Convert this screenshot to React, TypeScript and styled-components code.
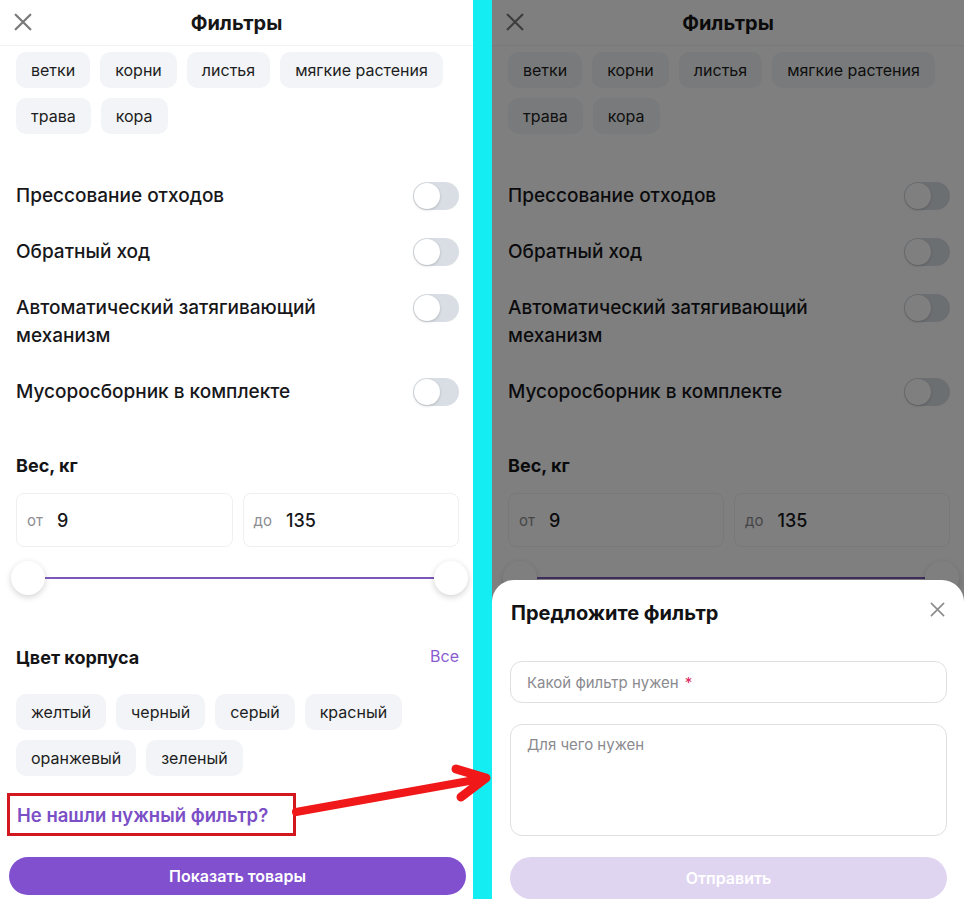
import React from "react";
import styled, { createGlobalStyle } from "styled-components";

const GlobalStyle = createGlobalStyle`
  * { box-sizing: border-box; }
  html, body { margin: 0; padding: 0; background: #ffffff; }
  body { font-family: Inter, "Noto Sans", "Liberation Sans", sans-serif; color: #1b1b1f; }
`;

const Page = styled.div`
  position: relative;
  display: flex;
  width: 964px;
  height: 899px;
  overflow: hidden;
  background: #ffffff;
`;

const Phone = styled.div<{ $w: number }>`
  position: relative;
  flex: 0 0 ${(p) => p.$w}px;
  width: ${(p) => p.$w}px;
  height: 899px;
  overflow: hidden;
  background: #ffffff;
`;

const Divider = styled.div`
  flex: 0 0 19px;
  background: #14eef2;
`;

const Header = styled.header`
  position: relative;
  height: 46px;
  display: flex;
  align-items: center;
  justify-content: center;
  border-bottom: 1px solid #f1f2f4;
`;

const HeaderClose = styled.button`
  position: absolute;
  left: 14px;
  top: 13px;
  width: 18px;
  height: 18px;
  padding: 0;
  border: 0;
  background: none;
  color: #7a7a7a;
  display: flex;
`;

const Title = styled.h1`
  margin: 0;
  font-size: 20px;
  line-height: 24px;
  font-weight: 700;
  color: #161616;
`;

const Body = styled.div`
  display: flex;
  flex-direction: column;
  padding: 6px 14px 0 16px;
`;

const ChipGrid = styled.div<{ $mt?: number }>`
  display: flex;
  flex-wrap: wrap;
  gap: 10px;
  margin-top: ${(p) => p.$mt ?? 0}px;
`;

const Chip = styled.span`
  height: 36px;
  display: inline-flex;
  align-items: center;
  padding: 0 15px;
  border-radius: 10px;
  background: #f2f4f7;
  font-size: 16px;
  font-weight: 400;
  color: #1d1d21;
`;

const ToggleList = styled.div`
  display: flex;
  flex-direction: column;
  gap: 28px;
  margin-top: 48px;
`;

const ToggleRow = styled.div`
  display: flex;
  align-items: flex-start;
  justify-content: space-between;
`;

const ToggleLabel = styled.span`
  flex: 1;
  padding-right: 64px;
  font-size: 19px;
  line-height: 28px;
  font-weight: 500;
  color: #17171a;
`;

const Switch = styled.span`
  position: relative;
  flex: 0 0 46px;
  height: 28px;
  border-radius: 14px;
  background: #d9dee4;
  &::after {
    content: "";
    position: absolute;
    left: 1px;
    top: 1px;
    width: 26px;
    height: 26px;
    border-radius: 50%;
    background: #ffffff;
    box-shadow: 0 1px 3px rgba(0, 0, 0, 0.18);
  }
`;

const SectionTitle = styled.h2<{ $mt: number }>`
  margin: ${(p) => p.$mt}px 0 0;
  font-size: 18px;
  line-height: 28px;
  font-weight: 700;
  color: #141416;
`;

const SectionHeader = styled.div`
  display: flex;
  align-items: center;
  justify-content: space-between;
  margin-top: 49px;
`;

const AllLink = styled.span`
  font-size: 16px;
  line-height: 24px;
  color: #8a5cd1;
  margin-top: -4px;
`;

const RangeInputs = styled.div`
  display: grid;
  grid-template-columns: 1fr 1fr;
  gap: 10px;
  margin-top: 13px;
`;

const RangeBox = styled.div`
  height: 54px;
  display: flex;
  align-items: center;
  gap: 14px;
  padding: 0 10px;
  border: 1px solid #eef0f2;
  border-radius: 8px;
`;

const RangePrefix = styled.span`
  font-size: 15px;
  color: #8d8d92;
`;

const RangeValue = styled.span`
  font-size: 18px;
  font-weight: 500;
  color: #17171a;
`;

const Slider = styled.div`
  display: flex;
  align-items: center;
  margin: 14px -9px 0 -5px;
`;

const Thumb = styled.span`
  flex: 0 0 34px;
  height: 34px;
  border-radius: 50%;
  background: #ffffff;
  box-shadow: 0 2px 6px rgba(0, 0, 0, 0.18);
`;

const SliderLine = styled.span`
  flex: 1;
  height: 2px;
  background: #7b57b8;
`;

const Highlight = styled.div<{ $marked?: boolean }>`
  width: 289px;
  height: 43px;
  margin: 17px 0 0 -9px;
  padding-left: 7px;
  display: flex;
  align-items: center;
  border: 3px solid ${(p) => (p.$marked ? "#d3171f" : "transparent")};
`;

const SuggestLink = styled.span`
  font-size: 18.5px;
  font-weight: 600;
  color: #7b4fc6;
`;

const ShowButton = styled.button`
  height: 38px;
  margin: 21px -7px 0 -7px;
  border: 0;
  border-radius: 19px;
  background: #8150cf;
  color: #ffffff;
  font-family: inherit;
  font-size: 16px;
  font-weight: 600;
`;

const Overlay = styled.div`
  position: absolute;
  inset: 0;
  z-index: 2;
  background: rgba(0, 0, 0, 0.5);
`;

const Sheet = styled.div`
  position: absolute;
  z-index: 3;
  left: 0;
  right: 0;
  top: 580px;
  bottom: 0;
  background: #ffffff;
  border-radius: 22px 22px 0 0;
  padding: 19px 17px 0 18px;
  display: flex;
  flex-direction: column;
`;

const SheetHeader = styled.div`
  position: relative;
  display: flex;
  align-items: center;
`;

const SheetTitle = styled.h3`
  margin: 0 0 0 1px;
  font-size: 20px;
  line-height: 28px;
  font-weight: 700;
  color: #121214;
`;

const SheetClose = styled.span`
  position: absolute;
  right: 2px;
  top: 3px;
  width: 15px;
  height: 15px;
  display: flex;
  color: #8c8c8c;
`;

const FieldBox = styled.div<{ $h: number; $mt: number; $top?: boolean }>`
  height: ${(p) => p.$h}px;
  margin-top: ${(p) => p.$mt}px;
  padding: ${(p) => (p.$top ? "10px 16px" : "0 16px")};
  display: flex;
  align-items: ${(p) => (p.$top ? "flex-start" : "center")};
  border: 1px solid #dedfe3;
  border-radius: 12px;
  font-size: 15px;
  color: #8a8a8f;
`;

const Required = styled.span`
  color: #e0245a;
  margin-left: 6px;
`;

const SubmitButton = styled.button`
  height: 42px;
  margin-top: 21px;
  border: 0;
  border-radius: 21px;
  background: #e0d5f1;
  color: #ffffff;
  font-family: inherit;
  font-size: 16px;
  font-weight: 600;
`;

const ArrowLayer = styled.svg`
  position: absolute;
  z-index: 5;
  left: 0;
  top: 0;
  pointer-events: none;
`;

const XIcon = ({ w = 2 }: { w?: number }) => (
  <svg viewBox="0 0 16 16" width="100%" height="100%" fill="none" stroke="currentColor" strokeWidth={w} strokeLinecap="round">
    <path d="M1.5 1.5 L14.5 14.5 M14.5 1.5 L1.5 14.5" />
  </svg>
);

const materials = ["ветки", "корни", "листья", "мягкие растения", "трава", "кора"];
const toggles = [
  "Прессование отходов",
  "Обратный ход",
  "Автоматический затягивающий механизм",
  "Мусоросборник в комплекте",
];
const colors = ["желтый", "черный", "серый", "красный", "оранжевый", "зеленый"];

// `covered`: the lower part lies under the bottom sheet, so it is not drawn.
const FilterScreen = ({ marked, covered }: { marked?: boolean; covered?: boolean }) => (
  <>
    <Header>
      <HeaderClose aria-label="Закрыть">
        <XIcon />
      </HeaderClose>
      <Title>Фильтры</Title>
    </Header>
    <Body>
      <ChipGrid>
        {materials.map((m) => (
          <Chip key={m}>{m}</Chip>
        ))}
      </ChipGrid>
      <ToggleList>
        {toggles.map((t) => (
          <ToggleRow key={t}>
            <ToggleLabel>{t}</ToggleLabel>
            <Switch />
          </ToggleRow>
        ))}
      </ToggleList>
      <SectionTitle $mt={46}>Вес, кг</SectionTitle>
      <RangeInputs>
        <RangeBox>
          <RangePrefix>от</RangePrefix>
          <RangeValue>9</RangeValue>
        </RangeBox>
        <RangeBox>
          <RangePrefix>до</RangePrefix>
          <RangeValue>135</RangeValue>
        </RangeBox>
      </RangeInputs>
      <Slider>
        <Thumb />
        <SliderLine />
        <Thumb />
      </Slider>
      {!covered && (
        <>
          <SectionHeader>
            <SectionTitle $mt={0}>Цвет корпуса</SectionTitle>
            <AllLink>Все</AllLink>
          </SectionHeader>
          <ChipGrid $mt={22}>
            {colors.map((c) => (
              <Chip key={c}>{c}</Chip>
            ))}
          </ChipGrid>
          <Highlight $marked={marked}>
            <SuggestLink>Не нашли нужный фильтр?</SuggestLink>
          </Highlight>
          <ShowButton>Показать товары</ShowButton>
        </>
      )}
    </Body>
  </>
);

export default function App() {
  return (
    <Page>
      <GlobalStyle />
      <Phone $w={473}>
        <FilterScreen marked />
      </Phone>
      <Divider />
      <Phone $w={472}>
        <FilterScreen covered />
        <Overlay />
        <Sheet>
          <SheetHeader>
            <SheetTitle>Предложите фильтр</SheetTitle>
            <SheetClose>
              <XIcon w={1.8} />
            </SheetClose>
          </SheetHeader>
          <FieldBox $h={42} $mt={34}>
            Какой фильтр нужен<Required>*</Required>
          </FieldBox>
          <FieldBox $h={112} $mt={21} $top>
            Для чего нужен
          </FieldBox>
          <SubmitButton>Отправить</SubmitButton>
        </Sheet>
      </Phone>
      <ArrowLayer width="964" height="899" viewBox="0 0 964 899">
        <g stroke="#f01818" fill="none" strokeLinecap="round" strokeLinejoin="round">
          <line x1="296" y1="812" x2="480" y2="779" strokeWidth="8" />
          <polyline points="456,769 486,778 461,797" strokeWidth="9" />
        </g>
      </ArrowLayer>
    </Page>
  );
}
